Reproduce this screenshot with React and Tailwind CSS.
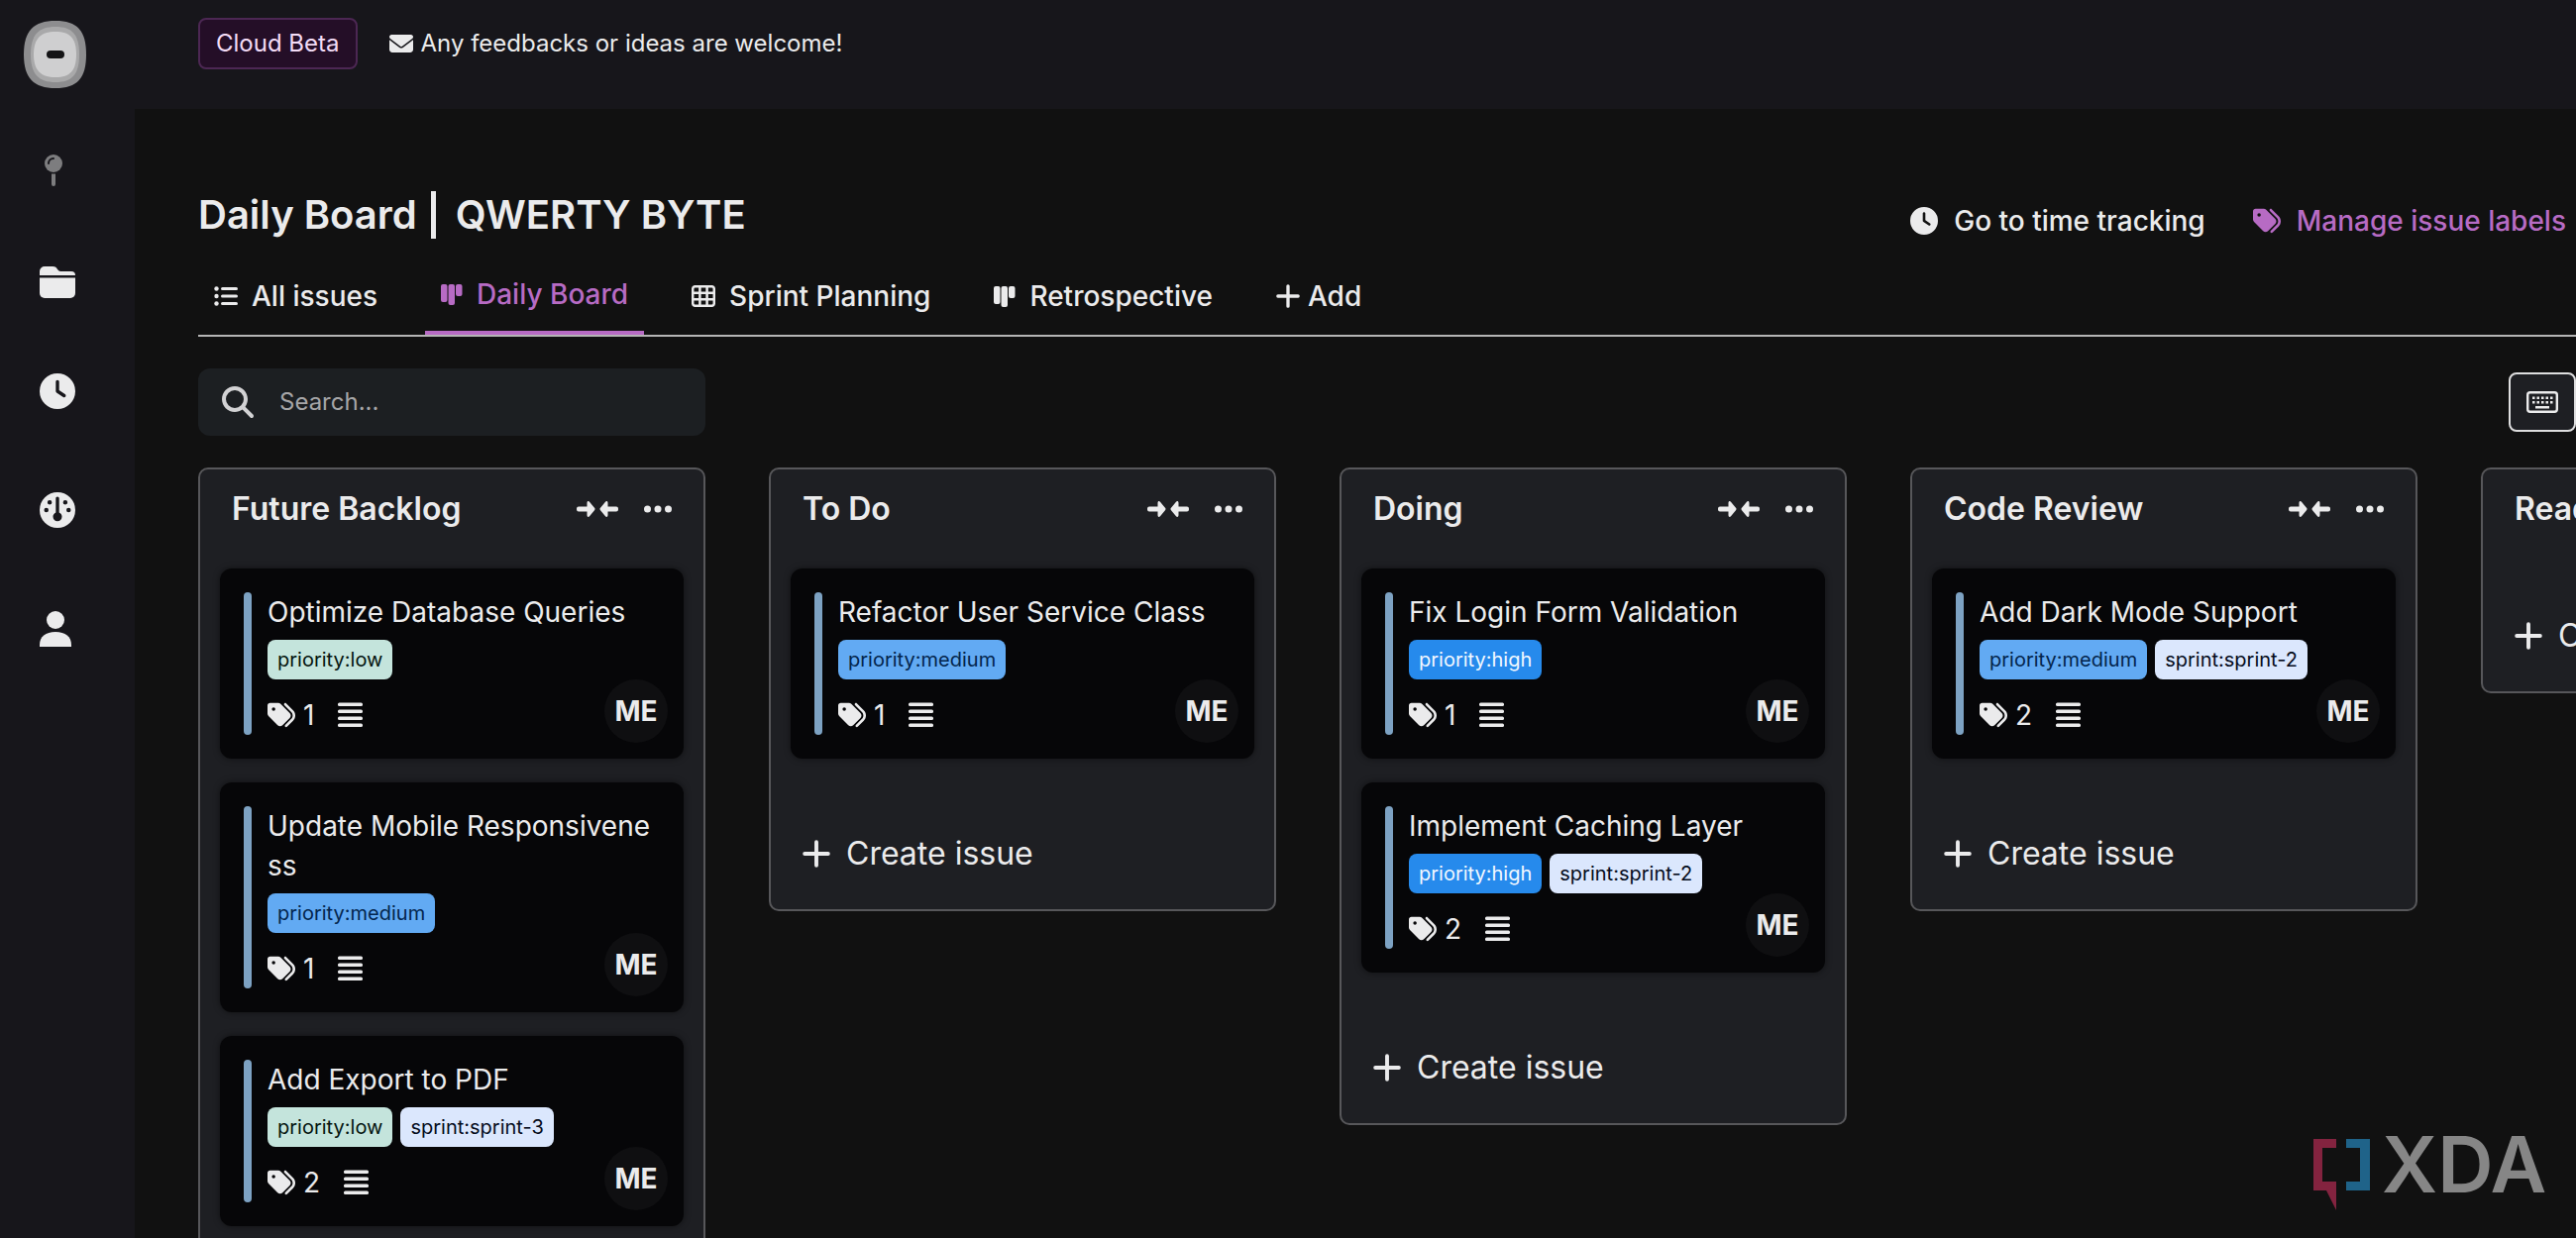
import { FaClock, FaEnvelope, FaGauge, FaMagnifyingGlass, FaTags } from "react-icons/fa6";

const labelStyles = {
  "priority:low": "bg-[#c4e4dc] text-[#04140f]",
  "priority:medium": "bg-[#62aaf3] text-[#03254d]",
  "priority:high": "bg-[#268aec] text-[#f2f8ff]",
  "sprint:sprint-2": "bg-[#dbe7fd] text-[#050c1c]",
  "sprint:sprint-3": "bg-[#dbe7fd] text-[#050c1c]",
};

const columns = [
  {
    title: "Future Backlog",
    issues: [
      { title: "Optimize Database Queries", labels: ["priority:low"] },
      { title: "Update Mobile Responsiveness", labels: ["priority:medium"] },
      { title: "Add Export to PDF", labels: ["priority:low", "sprint:sprint-3"] },
    ],
  },
  {
    title: "To Do",
    issues: [{ title: "Refactor User Service Class", labels: ["priority:medium"] }],
  },
  {
    title: "Doing",
    issues: [
      { title: "Fix Login Form Validation", labels: ["priority:high"] },
      { title: "Implement Caching Layer", labels: ["priority:high", "sprint:sprint-2"] },
    ],
  },
  {
    title: "Code Review",
    issues: [{ title: "Add Dark Mode Support", labels: ["priority:medium", "sprint:sprint-2"] }],
  },
  { title: "Ready", issues: [] },
];

const tabs = [
  { name: "All issues", icon: ListIcon },
  { name: "Daily Board", icon: BoardIcon, active: true },
  { name: "Sprint Planning", icon: GridIcon },
  { name: "Retrospective", icon: BoardIcon },
];

function LogoIcon() {
  return (
    <svg viewBox="0 0 64 68" className="h-[68px] w-16">
      <path d="M32 0C54 0 63 10 63 34S54 68 32 68 0 58 0 34 10 0 32 0Z" fill="#8d8d8f" />
      <path d="M32 6C49 6 56 14 56 34S49 62 32 62 7 54 7 34 15 6 32 6Z" fill="#a9a9aa" />
      <path d="M32 11C47 11 53 18 53 34S47 57 32 57 10 50 10 34 17 11 32 11Z" fill="#cfcfd0" />
      <rect x="23" y="30" width="18" height="8" rx="4" fill="#141416" />
    </svg>
  );
}

function PinIcon() {
  return (
    <svg viewBox="0 0 20 34" className="h-[34px] w-5">
      <circle cx="10" cy="10" r="9" fill="#7d7d7f" />
      <path d="M5 10a5 5 0 0 1 5-5" fill="none" stroke="#17161b" strokeWidth="2" strokeLinecap="round" />
      <path d="M8 20.5h4V31a2 2 0 0 1-4 0Z" fill="#7d7d7f" />
    </svg>
  );
}

function FolderIcon() {
  return (
    <svg viewBox="0 0 36 32" className="h-8 w-9" fill="currentColor">
      <path d="M0 9V5a5 5 0 0 1 5-5h8c3 0 4 1 5 3 1 1 2 2 3 2h11a4 4 0 0 1 4 4Z" />
      <path d="M0 11.500h36V27a5 5 0 0 1-5 5H5a5 5 0 0 1-5-5Z" />
    </svg>
  );
}

function PersonIcon() {
  return (
    <svg viewBox="0 0 32 36" className="h-9 w-8" fill="currentColor">
      <circle cx="16" cy="9" r="9" />
      <path d="M0 36v-2c0-8 6-13 16-13s16 5 16 13v2Z" />
    </svg>
  );
}

function ListIcon() {
  return (
    <svg viewBox="0 0 24 20" className="h-5 w-6" fill="currentColor">
      <circle cx="2.5" cy="2.5" r="2.2" />
      <circle cx="2.5" cy="10" r="2.2" />
      <circle cx="2.5" cy="17.5" r="2.2" />
      <rect x="7" y="1" width="17" height="3" rx="1.5" />
      <rect x="7" y="8.5" width="17" height="3" rx="1.5" />
      <rect x="7" y="16" width="17" height="3" rx="1.5" />
    </svg>
  );
}

function BoardIcon() {
  return (
    <svg viewBox="0 0 22 22" className="h-[22px] w-[22px]" fill="currentColor">
      <rect x="0" y="1" width="6.5" height="18" rx="2" />
      <rect x="7.5" y="1" width="6.5" height="21" rx="2" />
      <rect x="15" y="1" width="6.5" height="12" rx="2" />
    </svg>
  );
}

function GridIcon() {
  return (
    <svg viewBox="0 0 24 22" className="h-[22px] w-6" fill="none" stroke="currentColor" strokeWidth="2.5">
      <rect x="1.2" y="1.2" width="21.6" height="19.6" rx="2.5" />
      <path d="M8.4 1v20M15.6 1v20M1 7.7h22M1 14.3h22" />
    </svg>
  );
}

function PlusIcon({ className }) {
  return (
    <svg viewBox="0 0 26 26" className={className} fill="none" stroke="currentColor" strokeWidth="3.6" strokeLinecap="round">
      <path d="M13 2v22M2 13h22" />
    </svg>
  );
}

function KeyboardIcon() {
  return (
    <svg viewBox="0 0 32 22" className="h-[22px] w-8" fill="currentColor">
      <rect x="1.2" y="1.2" width="29.6" height="19.6" rx="2.5" fill="none" stroke="currentColor" strokeWidth="2.4" />
      {[6, 10.5, 15, 19.5, 24].map((x) => (
        <g key={x}>
          <rect x={x} y="5.5" width="2.5" height="2.5" />
          <rect x={x} y="10" width="2.5" height="2.5" />
        </g>
      ))}
      <rect x="9" y="15" width="14" height="2.5" />
    </svg>
  );
}

function CollapseIcon() {
  return (
    <svg viewBox="0 0 42 16" className="h-4 w-[42px]" fill="currentColor">
      <path d="M2 5.5h8.500V2c0-2 1.5-2.5 2.5-1.2l5 6c.7.8.7 1.6 0 2.400l-5 6c-1 1.300-2.500.8-2.500-1.200v-3.500H2a2 2 0 0 1-2-2v-1a2 2 0 0 1 2-2Z" />
      <path d="M40 5.5h-8.500V2c0-2-1.500-2.500-2.500-1.200l-5 6c-.7.8-.7 1.6 0 2.400l5 6c1 1.300 2.500.8 2.500-1.200v-3.500H40a2 2 0 0 0 2-2v-1a2 2 0 0 0-2-2Z" />
    </svg>
  );
}

function DotsIcon() {
  return (
    <svg viewBox="0 0 28 8" className="h-2 w-7" fill="currentColor">
      <circle cx="3.5" cy="4" r="3.5" />
      <circle cx="14" cy="4" r="3.5" />
      <circle cx="24.5" cy="4" r="3.5" />
    </svg>
  );
}

function LinesIcon() {
  return (
    <svg viewBox="0 0 25 26" className="h-[26px] w-[25px]" fill="currentColor">
      <rect y="0.5" width="25" height="3.6" rx="1.5" />
      <rect y="7.5" width="25" height="3.6" rx="1.5" />
      <rect y="14.5" width="25" height="3.6" rx="1.5" />
      <rect y="21.5" width="25" height="3.6" rx="1.5" />
    </svg>
  );
}

function IssueCard({ issue }) {
  return (
    <article className="flex gap-4 rounded-xl bg-[#060608] p-6 shadow-[0_0_6px_rgba(0,0,0,0.5)]">
      <div className="w-2 shrink-0 rounded-full bg-[#7da2c3]" />
      <div className="min-w-0 flex-1">
        <h3 className="text-[28px] leading-10 break-all">{issue.title}</h3>
        <div className="mt-2 flex gap-2">
          {issue.labels.map((label) => (
            <span key={label} className={`rounded-lg px-[10px] text-[20px] leading-10 ${labelStyles[label]}`}>
              {label}
            </span>
          ))}
        </div>
        <div className="mt-4 flex h-10 items-end">
          <div className="flex h-10 items-center">
            <FaTags className="size-7" />
            <span className="ml-2 text-[28px] leading-10">{issue.labels.length}</span>
            <span className="ml-6">
              <LinesIcon />
            </span>
          </div>
          <div className="-mr-2 -mb-2 ml-auto flex size-16 shrink-0 items-center justify-center rounded-full bg-[#0f0f11] text-[28px] font-bold">
            ME
          </div>
        </div>
      </div>
    </article>
  );
}

function Column({ column }) {
  return (
    <section className="w-[512px] shrink-0 rounded-[10px] border-2 border-[#57575a] bg-[#1e1f23]">
      <header className="flex h-24 items-center px-8 pb-4">
        <h2 className="text-[32px] font-semibold">{column.title}</h2>
        <button type="button" aria-label="Collapse column" className="ml-auto">
          <CollapseIcon />
        </button>
        <button type="button" aria-label="Column options" className="ml-[26px]">
          <DotsIcon />
        </button>
      </header>
      {column.issues.length > 0 && (
        <div className="flex flex-col gap-6 px-5 pt-1 pb-6">
          {column.issues.map((issue) => (
            <IssueCard key={issue.title} issue={issue} />
          ))}
        </div>
      )}
      <button type="button" className="mt-[52px] mb-9 flex items-center gap-4 px-8 text-[32px] leading-10">
        <PlusIcon className="size-7" />
        Create issue
      </button>
    </section>
  );
}

function Sidebar() {
  return (
    <nav className="flex w-[136px] shrink-0 flex-col bg-[#17161b] pt-[21px] pl-6">
      <a href="#home" aria-label="Home">
        <LogoIcon />
      </a>
      <button type="button" aria-label="Pin sidebar" className="mt-[66px] ml-5 self-start">
        <PinIcon />
      </button>
      <div className="mt-20 flex flex-col items-start gap-[76px] pl-4">
        <a href="#projects" aria-label="Projects">
          <FolderIcon />
        </a>
        <a href="#time" aria-label="Time tracking">
          <FaClock className="size-9" />
        </a>
        <a href="#dashboard" aria-label="Dashboard" className="mt-2">
          <FaGauge className="size-9" />
        </a>
        <a href="#profile" aria-label="Profile" className="mt-2">
          <PersonIcon />
        </a>
      </div>
    </nav>
  );
}

function Watermark() {
  return (
    <div className="absolute right-6 bottom-6 flex h-[76px] items-start gap-3">
      <svg viewBox="0 0 57 72" className="h-[72px] w-[57px]">
        <path d="M0 0h23v9H9v34h14v29L13 52H0Z" fill="#83233f" />
        <path d="M33 0h24v52H33v-9h14V9H33Z" fill="#1f6389" />
      </svg>
      <span className="w-[172px] text-[78px] leading-[52px] font-semibold text-[#868686]">XDA</span>
    </div>
  );
}

export default function App() {
  return (
    <div className="relative flex h-screen overflow-hidden bg-[#111111] font-['Inter',sans-serif] text-[#ebebec]">
      <Sidebar />
      <div className="flex min-w-0 flex-1 flex-col">
        <header className="flex h-[110px] shrink-0 items-start bg-[#17161b] pt-[18px] pl-16 text-[24px]">
          <button type="button" className="h-[52px] rounded-lg border-2 border-[#4c2753] bg-[#240e27] px-4 text-[#f3dcf6]">
            Cloud Beta
          </button>
          <a href="#feedback" className="ml-8 flex h-[52px] items-center gap-2">
            <FaEnvelope className="size-6" />
            Any feedbacks or ideas are welcome!
          </a>
        </header>

        <main className="min-w-0 pt-20 pl-16">
          <div className="flex items-center pr-[10px]">
            <h1 className="flex h-12 items-center text-[40px] font-semibold">
              Daily Board
              <span className="mr-5 ml-[14px] h-12 w-[5px] bg-[#ebebec]" />
              QWERTY BYTE
            </h1>
            <div className="ml-auto flex items-center gap-12 pt-3 text-[28px] font-medium">
              <a href="#time" className="flex items-center gap-4">
                <FaClock className="size-7" />
                Go to time tracking
              </a>
              <a href="#labels" className="flex items-center gap-4 text-[#b76bc4]">
                <FaTags className="size-7" />
                Manage issue labels
              </a>
            </div>
          </div>

          <div className="mt-4 flex h-20 items-stretch gap-8 border-b-2 border-[#b5b5b5] text-[28px] font-medium">
            {tabs.map(({ name, icon: Icon, active }) => (
              <button
                key={name}
                type="button"
                className={
                  active
                    ? "flex items-center gap-[14px] border-b-4 border-[#b76bc4] px-4 text-[#b76bc4]"
                    : "flex items-center gap-[14px] px-4"
                }
              >
                <Icon />
                {name}
              </button>
            ))}
            <button type="button" className="flex items-center gap-2 px-4">
              <PlusIcon className="size-6" />
              Add
            </button>
          </div>

          <div className="mt-8 flex items-center justify-between">
            <label className="flex h-[68px] w-[512px] items-center gap-[26px] rounded-xl bg-[#1c1f22] px-6">
              <FaMagnifyingGlass className="size-8 shrink-0 text-[#d2d2d4]" />
              <input
                type="text"
                aria-label="Search"
                placeholder="Search..."
                className="min-w-0 flex-1 bg-transparent text-[24px] outline-none placeholder:text-[#a6a6a8]"
              />
            </label>
            <button
              type="button"
              aria-label="Keyboard shortcuts"
              className="flex h-[60px] w-[68px] items-center justify-center rounded-lg border-2 border-[#dededf] bg-[#1e1f23]"
            >
              <KeyboardIcon />
            </button>
          </div>

          <div className="mt-8 flex items-start gap-16">
            {columns.map((column) => (
              <Column key={column.title} column={column} />
            ))}
          </div>
        </main>
      </div>
      <Watermark />
    </div>
  );
}
